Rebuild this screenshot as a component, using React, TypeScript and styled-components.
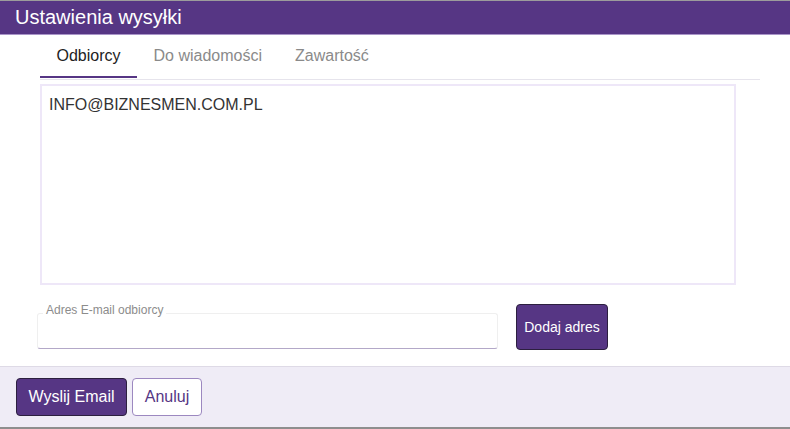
import React from "react";
import styled, { createGlobalStyle } from "styled-components";

const Global = createGlobalStyle`
  html, body { margin: 0; padding: 0; background: #ffffff; }
  body { font-family: "Liberation Sans", Arial, sans-serif; }
  * { box-sizing: border-box; }
`;

const Dialog = styled.div`
  width: 790px;
  height: 429px;
  display: flex;
  flex-direction: column;
  border-top: 1px solid #9c9c9c;
  border-bottom: 2px solid #8e8e8e;
  background: #fff;
`;

const Header = styled.div`
  height: 34px;
  flex: none;
  background: #563684;
  border-bottom: 1px solid #a995c8;
  color: #fff;
  font-size: 20px;
  display: flex;
  align-items: center;
  padding-left: 15px;
  padding-bottom: 1px;
`;

const Body = styled.div`
  flex: 1;
  display: flex;
  flex-direction: column;
`;

const Tabs = styled.div`
  display: flex;
  margin: 0 30px 0 40px;
  padding-top: 1px;
  border-bottom: 1px solid #e6e4ec;
  height: 45px;
`;

const Tab = styled.div<{ $active?: boolean }>`
  padding: 0 16.5px;
  font-size: 16px;
  color: ${(p) => (p.$active ? "#222" : "#8a8a8a")};
  display: flex;
  align-items: center;
  height: 42px;
  padding-top: 1px;
  padding-bottom: 1px;
  border-bottom: 2px solid ${(p) => (p.$active ? "#563684" : "transparent")};
`;

const Recipients = styled.div`
  margin: 4px 0 0 40px;
  width: 696px;
  height: 201px;
  border: 2px solid #eee7f8;
  padding: 9px 7px;
  font-size: 16px;
  color: #333;
  line-height: 20px;
`;

const AddRow = styled.div`
  display: flex;
  align-items: flex-start;
  gap: 18px;
  margin: 19px 0 0 37px;
`;

const Field = styled.div`
  position: relative;
  width: 461px;
  margin-top: 9px;
`;

const FieldLabel = styled.span`
  position: absolute;
  left: 6px;
  top: -10px;
  padding: 0 3px;
  background: #fff;
  font-size: 12px;
  line-height: 14px;
  color: #8c8c8c;
`;

const Input = styled.input`
  display: block;
  width: 100%;
  height: 36px;
  border: 1px solid #efefef;
  border-bottom: 1px solid #b3a8c8;
  border-radius: 3px;
  outline: none;
  font-family: inherit;
  font-size: 14px;
  padding: 0 10px;
`;

const Button = styled.button<{ $variant?: "primary" | "outline" }>`
  font-family: "Liberation Sans", Arial, sans-serif;
  border-radius: 4px;
  cursor: pointer;
  padding: 0;
  background: ${(p) => (p.$variant === "outline" ? "#ffffff" : "#563684")};
  color: ${(p) => (p.$variant === "outline" ? "#563684" : "#ffffff")};
  border: 1px solid ${(p) => (p.$variant === "outline" ? "#9c88c0" : "#2c1f3f")};
`;

const AddButton = styled(Button)`
  width: 92px;
  height: 46px;
  font-size: 14px;
`;

const FooterButton = styled(Button)<{ $w: number }>`
  width: ${(p) => p.$w}px;
  height: 38px;
  font-size: 16px;
`;

const Footer = styled.div`
  height: 61px;
  flex: none;
  background: #efecf6;
  border-top: 1px solid #dedae6;
  display: flex;
  align-items: center;
  gap: 5px;
  padding: 0 16px 1px;
`;

export default function App() {
  return (
    <>
      <Global />
      <Dialog>
        <Header>Ustawienia wysyłki</Header>
        <Body>
          <Tabs>
            <Tab $active>Odbiorcy</Tab>
            <Tab>Do wiadomości</Tab>
            <Tab>Zawartość</Tab>
          </Tabs>
          <Recipients>INFO@BIZNESMEN.COM.PL</Recipients>
          <AddRow>
            <Field>
              <FieldLabel>Adres E-mail odbiorcy</FieldLabel>
              <Input />
            </Field>
            <AddButton>Dodaj adres</AddButton>
          </AddRow>
        </Body>
        <Footer>
          <FooterButton $w={111}>Wyslij Email</FooterButton>
          <FooterButton $w={70} $variant="outline">Anuluj</FooterButton>
        </Footer>
      </Dialog>
    </>
  );
}
